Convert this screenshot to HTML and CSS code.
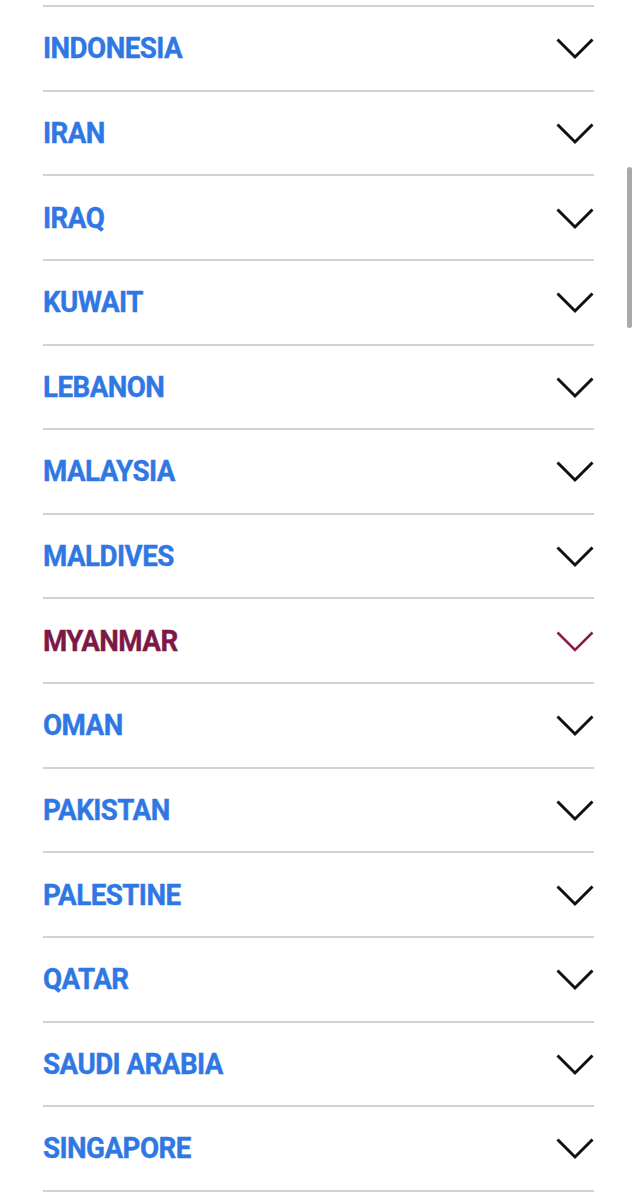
FILE: index.html
```html
<!DOCTYPE html>
<html lang="en">
<head>
<meta charset="utf-8">
<title>Countries</title>
<link rel="stylesheet" href="styles.css">
</head>
<body>
<div class="page">
  <ul class="list">
    <li class="row"><span class="name">INDONESIA</span><svg class="chev" viewBox="0 0 38 22"><path d="M1.5 1.5 L19 19 L36.5 1.5"/></svg></li>
    <li class="row"><span class="name">IRAN</span><svg class="chev" viewBox="0 0 38 22"><path d="M1.5 1.5 L19 19 L36.5 1.5"/></svg></li>
    <li class="row"><span class="name">IRAQ</span><svg class="chev" viewBox="0 0 38 22"><path d="M1.5 1.5 L19 19 L36.5 1.5"/></svg></li>
    <li class="row"><span class="name">KUWAIT</span><svg class="chev" viewBox="0 0 38 22"><path d="M1.5 1.5 L19 19 L36.5 1.5"/></svg></li>
    <li class="row"><span class="name">LEBANON</span><svg class="chev" viewBox="0 0 38 22"><path d="M1.5 1.5 L19 19 L36.5 1.5"/></svg></li>
    <li class="row"><span class="name">MALAYSIA</span><svg class="chev" viewBox="0 0 38 22"><path d="M1.5 1.5 L19 19 L36.5 1.5"/></svg></li>
    <li class="row"><span class="name">MALDIVES</span><svg class="chev" viewBox="0 0 38 22"><path d="M1.5 1.5 L19 19 L36.5 1.5"/></svg></li>
    <li class="row active"><span class="name">MYANMAR</span><svg class="chev" viewBox="0 0 38 22"><path d="M1.5 1.5 L19 19 L36.5 1.5"/></svg></li>
    <li class="row"><span class="name">OMAN</span><svg class="chev" viewBox="0 0 38 22"><path d="M1.5 1.5 L19 19 L36.5 1.5"/></svg></li>
    <li class="row"><span class="name">PAKISTAN</span><svg class="chev" viewBox="0 0 38 22"><path d="M1.5 1.5 L19 19 L36.5 1.5"/></svg></li>
    <li class="row"><span class="name">PALESTINE</span><svg class="chev" viewBox="0 0 38 22"><path d="M1.5 1.5 L19 19 L36.5 1.5"/></svg></li>
    <li class="row"><span class="name">QATAR</span><svg class="chev" viewBox="0 0 38 22"><path d="M1.5 1.5 L19 19 L36.5 1.5"/></svg></li>
    <li class="row"><span class="name">SAUDI ARABIA</span><svg class="chev" viewBox="0 0 38 22"><path d="M1.5 1.5 L19 19 L36.5 1.5"/></svg></li>
    <li class="row"><span class="name">SINGAPORE</span><svg class="chev" viewBox="0 0 38 22"><path d="M1.5 1.5 L19 19 L36.5 1.5"/></svg></li>
  </ul>
</div>
<div class="scrollbar"></div>
</body>
</html>
```

FILE: styles.css
```css
html, body {
  margin: 0;
  padding: 0;
  background: #ffffff;
}

body {
  font-family: Roboto, "Liberation Sans", sans-serif;
  height: 1200px;
  overflow: hidden;
}

.page {
  padding: 5px 43px 0 43px;
}

.list {
  list-style: none;
  margin: 0;
  padding: 0;
  width: 551px;
  border-top: 2px solid #d2d2d2;
}

.row {
  height: 82.64px;
  border-bottom: 2px solid #d2d2d2;
  display: flex;
  align-items: center;
  justify-content: space-between;
}

.name {
  display: inline-block;
  font-weight: 700;
  font-size: 30px;
  letter-spacing: -0.6px;
  color: #2f78e4;
  line-height: 1;
  transform: scaleX(0.925);
  transform-origin: left center;
  -webkit-text-stroke: 0.4px currentColor;
}

.chev {
  width: 38px;
  height: 22px;
  margin-top: 2px;
}

.chev path {
  fill: none;
  stroke: #111111;
  stroke-width: 3;
}

.active .name {
  color: #7b1846;
}

.active .chev path {
  stroke: #8a1d4e;
  stroke-width: 2.5;
}

.scrollbar {
  position: absolute;
  left: 627px;
  top: 167px;
  width: 5px;
  height: 161px;
  border-radius: 3px;
  background: #a9a9a9;
}
```
